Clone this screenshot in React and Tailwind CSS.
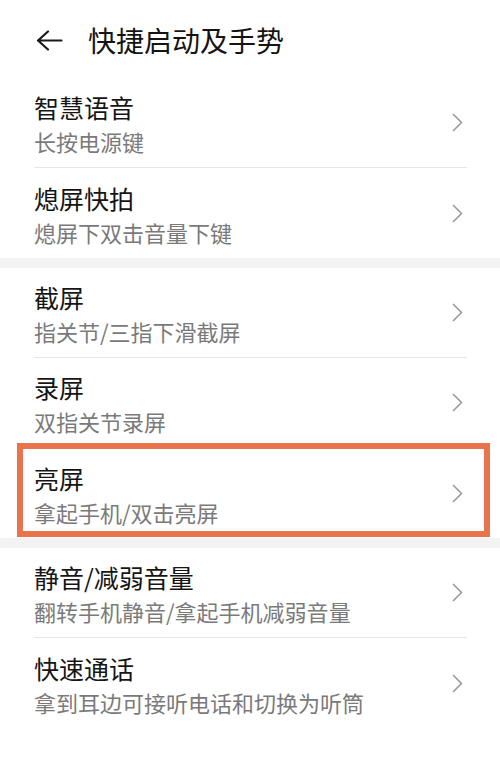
import React from "react";

const Chevron = () => (
  <svg width="11" height="19" viewBox="0 0 11 19" fill="none" className="shrink-0">
    <polyline points="1.5,1.5 9.5,9.5 1.5,17.5" stroke="#9a9a9a" strokeWidth="1.7" strokeLinecap="round" strokeLinejoin="round" />
  </svg>
);

const Row = ({ title, sub, last }) => (
  <div className={"mx-[34px] mr-[33px] h-[90px] flex items-center justify-between pr-[4px] " + (last ? "" : "border-b border-[#e6e6e6]")}>
    <div className="flex flex-col gap-[4px] pt-[1px]">
      <div className="text-[25px] leading-[32px] text-[#151515]">{title}</div>
      <div className="text-[22px] leading-[28px] text-[#7a7a7a]">{sub}</div>
    </div>
    <Chevron />
  </div>
);

export default function App() {
  return (
    <div className="w-[500px] h-[766px] bg-white overflow-hidden" style={{ fontFamily: '"Noto Sans CJK SC", "Noto Sans", sans-serif' }}>
      <div className="h-[78px] flex items-center pl-[36px] pt-[2px]">
        <svg width="27" height="21" viewBox="0 0 27 21" fill="none">
          <path d="M25.5 10.5 H2 M12 1.5 L2 10.5 L12 19.5" stroke="#1a1a1a" strokeWidth="2.2" strokeLinecap="round" strokeLinejoin="round" />
        </svg>
        <div className="ml-[25px] text-[28px] leading-[36px] text-[#141414]">快捷启动及手势</div>
      </div>
      <div>
        <Row title="智慧语音" sub="长按电源键" />
        <Row title="熄屏快拍" sub="熄屏下双击音量下键" last />
      </div>
      <div className="h-[10px] bg-[#f3f3f3]" />
      <div>
        <Row title="截屏" sub="指关节/三指下滑截屏" />
        <Row title="录屏" sub="双指关节录屏" />
        <div className="relative">
          <Row title="亮屏" sub="拿起手机/双击亮屏" last />
          <div className="absolute left-[17px] top-[-5px] w-[473px] h-[94px] border-[6px] border-[#e9734b] pointer-events-none" />
        </div>
      </div>
      <div className="h-[10px] bg-[#f3f3f3]" />
      <div>
        <Row title="静音/减弱音量" sub="翻转手机静音/拿起手机减弱音量" />
        <Row title="快速通话" sub="拿到耳边可接听电话和切换为听筒" last />
      </div>
    </div>
  );
}
